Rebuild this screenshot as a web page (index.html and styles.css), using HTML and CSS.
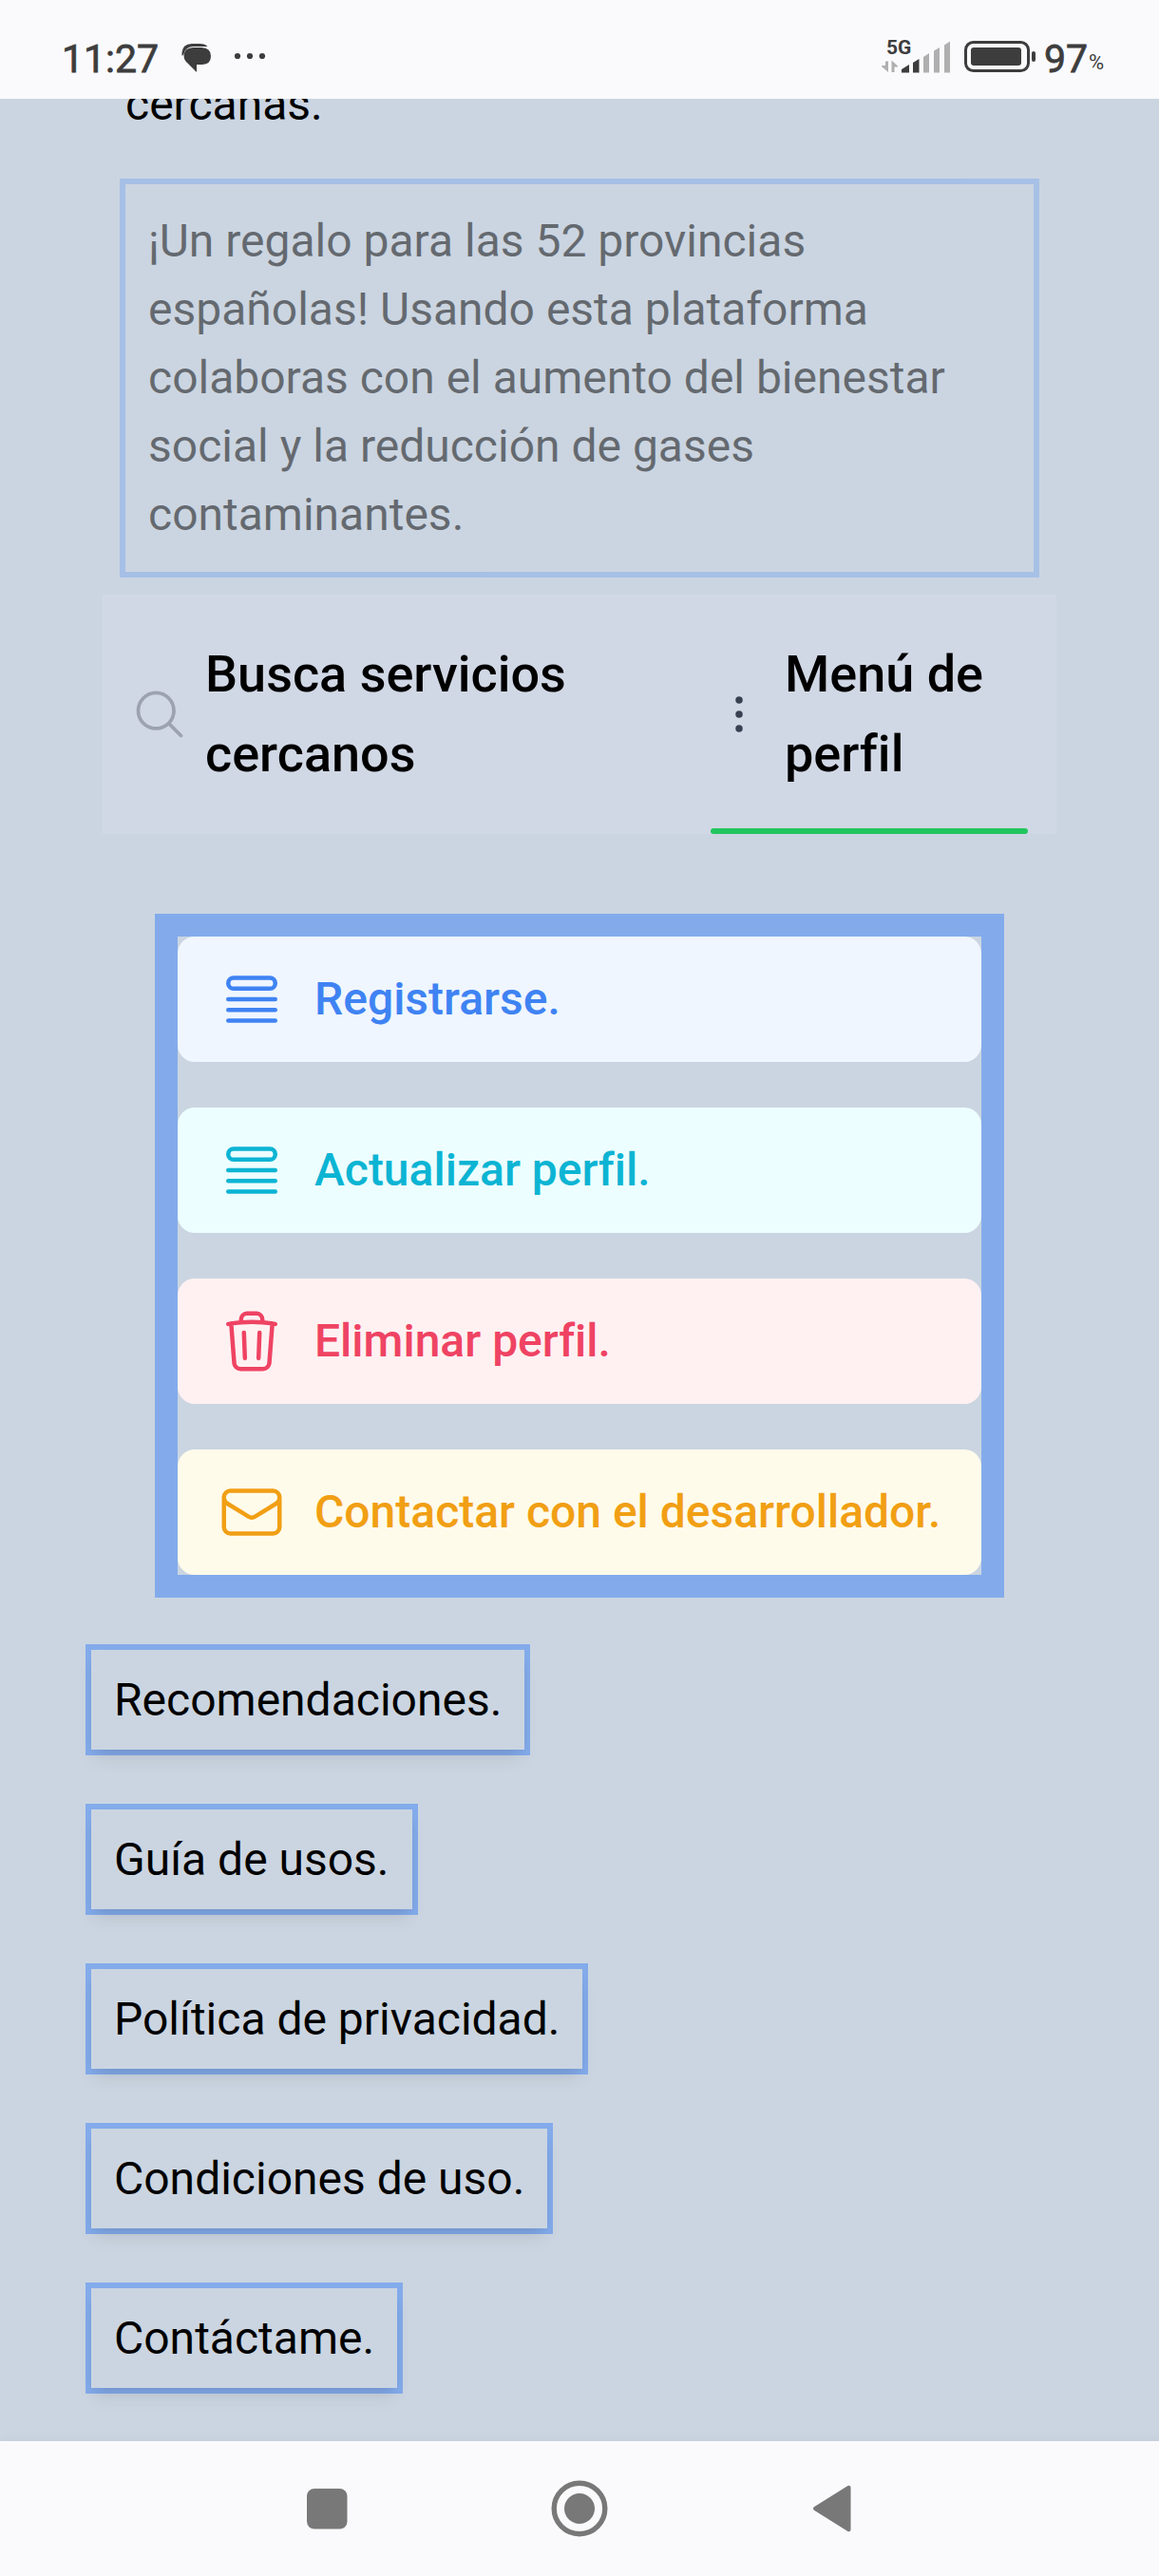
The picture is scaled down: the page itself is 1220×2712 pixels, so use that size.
FILE: index.html
```html
<!DOCTYPE html>
<html lang="es">
<head>
<meta charset="utf-8">
<title>Menú de perfil</title>
<link rel="stylesheet" href="styles.css">
</head>
<body>
<div class="phone">
  <header class="status-bar">
    <span class="clock">11:27</span>
    <svg class="chat" width="32" height="31" viewBox="0 0 32 31"><path d="M0.5 12.500V9.500Q1 0.300 11 0H19Q25 0.200 27.500 3H13Q4 3 2 12Z"/><path d="M12.500 4H21Q31 4.500 31 13Q31 21.500 22 22H16V30L4.500 18.500Q2.500 16 2.500 12.500Q3 4.300 12.500 4Z"/></svg>
    <svg class="more" width="34" height="8" viewBox="0 0 34 8"><circle cx="4" cy="4" r="3.100"/><circle cx="17" cy="4" r="3.100"/><circle cx="30" cy="4" r="3.100"/></svg>
    <div class="signal">
      <span class="network">5G</span>
      <svg width="76" height="36" viewBox="0 0 76 36">
        <g class="faint"><path d="M4 21.500H7V33L0 27V26H4ZM10.500 20.500L17 26.500V27.500H13.500V33H10.500Z"/><path d="M44 17L50 13V33.500H44ZM55 10.500L61 7V33.500H55ZM66 4.500L72 0.500V33.500H66Z"/></g>
        <path d="M21 30L29 25V33.500H21ZM33 23L39.500 19V33.500H33Z"/>
      </svg>
    </div>
    <svg class="battery" width="76" height="34" viewBox="0 0 76 34"><rect x="1.500" y="1.500" width="66" height="30" rx="8" class="shell"/><rect x="7" y="7" width="53" height="19" rx="3"/><rect x="71" y="11" width="4" height="11" rx="2"/></svg>
    <span class="level">97</span><span class="percent">%</span>
  </header>
  <main class="page">
    <p class="intro">cercanas.</p>
    <p class="notice">¡Un regalo para las 52 provincias españolas! Usando esta plataforma colaboras con el aumento del bienestar social y la reducción de gases contaminantes.</p>
    <nav class="tabs">
      <a class="tab tab-search">
        <svg class="tab-icon search" viewBox="0 0 24 24"><path d="M21 21l-5.197-5.197m0 0A7.500 7.500 0 1 0 5.196 5.196a7.500 7.500 0 0 0 10.607 10.607z"/></svg>
        <span>Busca servicios cercanos</span>
      </a>
      <a class="tab tab-profile active">
        <svg class="tab-icon dots" viewBox="0 0 24 24"><circle cx="12" cy="6" r="1.500"/><circle cx="12" cy="12" r="1.500"/><circle cx="12" cy="18" r="1.500"/></svg>
        <span>Menú de perfil</span>
      </a>
    </nav>
    <section class="actions">
      <button class="action blue"><svg viewBox="0 0 24 24"><path d="M3.750 12h16.500m-16.500 3.750h16.500M3.750 19.500h16.500M5.625 4.500h12.750a1.875 1.875 0 0 1 0 3.750H5.625a1.875 1.875 0 0 1 0-3.750z"/></svg>Registrarse.</button>
      <button class="action cyan"><svg viewBox="0 0 24 24"><path d="M3.750 12h16.500m-16.500 3.750h16.500M3.750 19.500h16.500M5.625 4.500h12.750a1.875 1.875 0 0 1 0 3.750H5.625a1.875 1.875 0 0 1 0-3.750z"/></svg>Actualizar perfil.</button>
      <button class="action rose"><svg viewBox="0 0 24 24"><path d="M14.740 9l-.346 9m-4.788 0L9.260 9m9.968-3.210c.342.052.682.107 1.022.166m-1.022-.165L18.160 19.673a2.250 2.250 0 0 1-2.244 2.077H8.084a2.250 2.250 0 0 1-2.244-2.077L4.772 5.790m14.456 0a48.108 48.108 0 0 0-3.478-.397m-12 .562c.340-.059.680-.114 1.022-.165m0 0a48.110 48.110 0 0 1 3.478-.397m7.500 0v-.916c0-1.180-.910-2.164-2.090-2.201a51.964 51.964 0 0 0-3.320 0c-1.180.037-2.090 1.022-2.090 2.201v.916m7.500 0a48.667 48.667 0 0 0-7.500 0"/></svg>Eliminar perfil.</button>
      <button class="action amber"><svg viewBox="0 0 24 24"><path d="M21.750 6.750v10.500a2.250 2.250 0 0 1-2.250 2.250h-15a2.250 2.250 0 0 1-2.250-2.250V6.750m19.500 0A2.250 2.250 0 0 0 19.500 4.500h-15a2.250 2.250 0 0 0-2.250 2.250m19.500 0v.243a2.250 2.250 0 0 1-1.070 1.916l-7.500 4.615a2.250 2.250 0 0 1-2.360 0L3.320 8.910a2.250 2.250 0 0 1-1.070-1.916V6.750"/></svg>Contactar con el desarrollador.</button>
    </section>
    <footer class="links">
      <div class="link"><a>Recomendaciones.</a></div>
      <div class="link"><a>Guía de usos.</a></div>
      <div class="link"><a>Política de privacidad.</a></div>
      <div class="link"><a>Condiciones de uso.</a></div>
      <div class="link"><a>Contáctame.</a></div>
    </footer>
  </main>
  <div class="nav-bar">
    <svg width="60" height="60" viewBox="0 0 60 60"><rect x="9" y="9" width="42.500" height="42.500" rx="8"/></svg>
    <svg width="60" height="60" viewBox="0 0 60 60"><circle cx="30" cy="30" r="26.800" class="ring"/><circle cx="30" cy="30" r="16"/></svg>
    <svg width="60" height="60" viewBox="0 0 60 60"><path class="back" d="M12 30L47.500 7.800V52.200Z"/></svg>
  </div>
</div>
</body>
</html>
```
FILE: styles.css
```css
* { box-sizing: border-box; }

body {
  margin: 0;
  font-family: Roboto, "Liberation Sans", sans-serif;
  font-size: 48px;
  line-height: 72px;
  font-variant-ligatures: none;
  color: #000;
}

svg { display: block; flex: none; }
p { margin: 0; }

.phone {
  width: 1220px;
  height: 2712px;
  display: grid;
  grid-template-rows: 104px 2466px 142px;
  overflow: hidden;
  background: #cbd5e1;
}

/* Android status bar */
.status-bar {
  display: flex;
  align-items: flex-start;
  padding: 0 54px 0 65px;
  background: #fafafc;
  color: #3d3d3d;
  fill: #3d3d3d;
  white-space: nowrap;
}
.clock, .level {
  font-size: 41px;
  font-weight: 400;
  line-height: 48px;
  margin-top: 38px;
  -webkit-text-stroke: .8px #3d3d3d;
}
.clock { width: 126px; }
.chat { margin-top: 46px; }
.more { margin: 55px 0 0 23px; }
.signal { margin: 36px 0 0 648px; width: 76px; display: grid; }
.signal > * { grid-area: 1 / 1; }
.signal svg { margin-top: 7px; }
.network { font-size: 21px; font-weight: 700; line-height: 24px; padding-left: 5px; margin-top: 2px; }
.faint { fill: #afafb0; }
.battery { margin: 43px 0 0 11px; }
.shell { fill: none; stroke: #3d3d3d; stroke-width: 3; }
.level { margin-left: 8px; width: 47px; }
.percent { font-size: 22px; line-height: 26px; margin-top: 53px; }

/* Page content, scrolled so that the first line is cut by the status bar */
.page { overflow: hidden; display: flex; flex-direction: column; }
.intro { margin: -30px 0 0 132px; flex: none; }
.notice {
  margin: 42px 126px 0;
  padding: 24px;
  border: 6px solid #3b82f680;
  opacity: .5;
}

.tabs {
  margin: 18px 108px 0;
  height: 252px;
  flex: none;
  padding: 0 30px;
  display: flex;
  justify-content: space-between;
  background: #d1d8e5;
  font-size: 54px;
  font-weight: 500;
  line-height: 84px;
}
.tab { display: flex; align-items: center; gap: 18px; }
.tab-search { width: 500px; }
.tab-profile { width: 334px; position: relative; }
.active::after {
  content: "";
  position: absolute;
  left: 0;
  right: 0;
  bottom: 0;
  height: 6px;
  border-radius: 3px;
  background: #22c55e;
}
.tab-icon { width: 60px; height: 60px; }
.search { fill: none; stroke: #9ca3af; stroke-width: 1.5; stroke-linecap: round; stroke-linejoin: round; }
.dots { fill: #374151; }

.actions {
  margin: 84px 163px 0;
  flex: none;
  border: 24px solid #3b82f680;
  display: flex;
  flex-direction: column;
  gap: 48px;
}
.action {
  height: 132px;
  border: 0;
  border-radius: 18px;
  padding: 0 42px;
  display: flex;
  align-items: center;
  gap: 30px;
  font: 500 48px/72px Roboto, "Liberation Sans", sans-serif;
  font-variant-ligatures: none;
  white-space: nowrap;
}
.action svg {
  width: 72px;
  height: 72px;
  fill: none;
  stroke: currentColor;
  stroke-width: 1.5;
  stroke-linecap: round;
  stroke-linejoin: round;
}
.blue { background: #eff6ff; color: #3f83f3; }
.cyan { background: #ecfeff; color: #0cb4d3; }
.rose { background: #fff1f2; color: #ef4363; }
.amber { background: #fffbeb; color: #f19f14; }

.links {
  margin: 49px 90px 0;
  display: flex;
  flex-direction: column;
  align-items: flex-start;
  gap: 51px;
}
.link { border: 6px solid #3b82f680; }
.link a {
  display: block;
  padding: 16.5px 24px;
  box-shadow: 0 12px 18px -3px #00000016, 0 6px 12px -6px #00000016;
}

/* Android navigation bar */
.nav-bar {
  display: flex;
  justify-content: space-between;
  padding: 41px 314px 0;
  background: #fafafc;
  fill: #787878;
  box-shadow: 0 0 12px #0000000d;
}
.ring { fill: none; stroke: #787878; stroke-width: 5.4; }
.back { stroke: #787878; stroke-width: 4; stroke-linejoin: round; }
```
